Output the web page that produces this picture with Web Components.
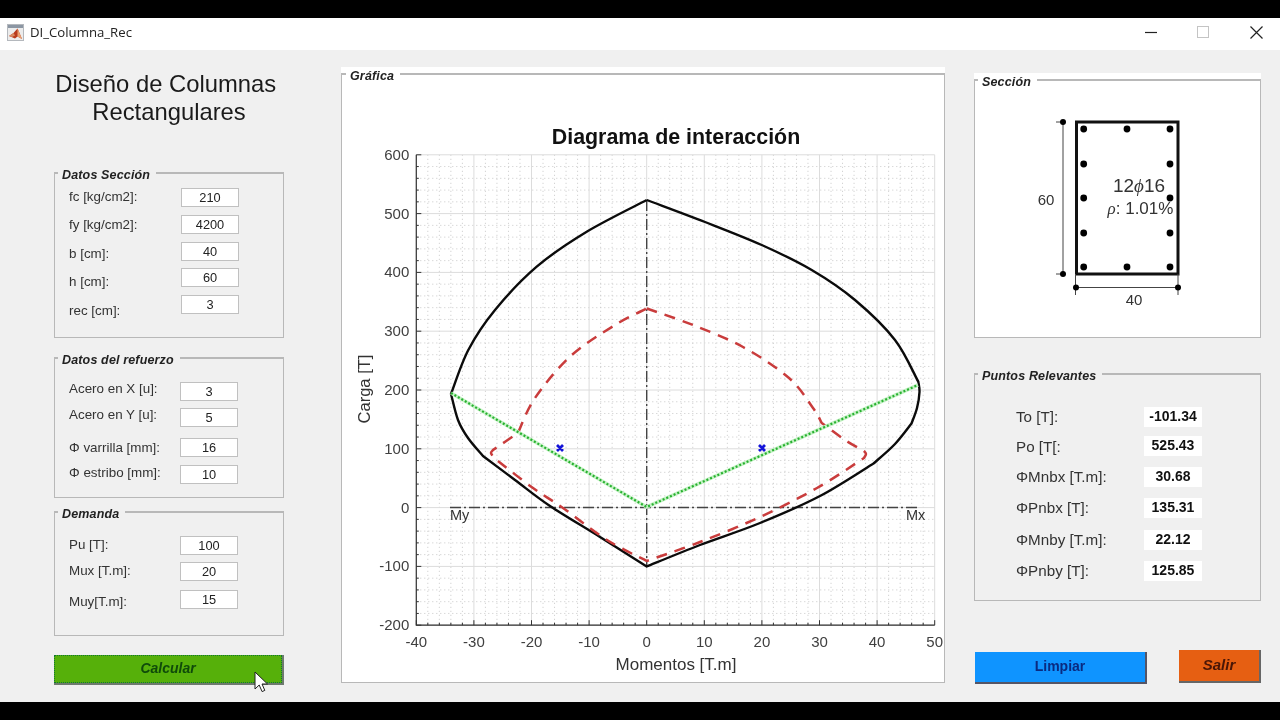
<!DOCTYPE html>
<html lang="es"><head><meta charset="utf-8"><title>DI_Columna_Rec</title>
<style>
html,body{margin:0;padding:0;background:#000}
body{font-family:"Liberation Sans",Arial,sans-serif}
</style></head><body>
<x-window>
  <x-titlebar slot="top" caption="DI_Columna_Rec"></x-titlebar>
  <x-column slot="left" style="--w:230px;--pt:20px">
    <x-heading>Diseño de Columnas&nbsp;<br>Rectangulares</x-heading>
    <x-panel caption="Datos Sección" style="--h:172px;--mt:40px;--lw:112px">
      <x-field label="fc [kg/cm2]:" value="210" gap="8" nudge="-1"></x-field>
      <x-field label="fy [kg/cm2]:" value="4200" gap="8" nudge="0"></x-field>
      <x-field label="b [cm]:" value="40" gap="8" nudge="2"></x-field>
      <x-field label="h [cm]:" value="60" gap="7" nudge="4"></x-field>
      <x-field label="rec [cm]:" value="3" gap="8" nudge="6"></x-field>
    </x-panel>
    <x-panel caption="Datos del refuerzo" style="--h:147px;--mt:13px;--lw:111px">
      <x-field label="Acero en X [u]:" value="3" gap="17" nudge="-3.5"></x-field>
      <x-field label="Acero en Y [u]:" value="5" gap="7" nudge="-3.5"></x-field>
      <x-field label="Φ varrilla [mm]:" value="16" gap="11" nudge="-0.5"></x-field>
      <x-field label="Φ estribo [mm]:" value="10" gap="8" nudge="-2"></x-field>
    </x-panel>
    <x-panel caption="Demanda" style="--h:131px;--mt:7px;--lw:111px">
      <x-field label="Pu [T]:" value="100" gap="17" nudge="-1"></x-field>
      <x-field label="Mux [T.m]:" value="20" gap="7" nudge="-1.5"></x-field>
      <x-field label="Muy[T.m]:" value="15" gap="9" nudge="1.5"></x-field>
    </x-panel>
    <x-button kind="calc" style="--mt:19px;--bw:230px;--bh:30px">Calcular<x-cursor slot="over"></x-cursor></x-button>
  </x-column>
  <x-column slot="mid" style="--w:604px;--pt:17px">
    <x-panel caption="Gráfica" white flush style="--h:616px;--lm:4px"><x-plot></x-plot></x-panel>
  </x-column>
  <x-column slot="right" style="--w:287px;--pt:23px">
    <x-panel caption="Sección" white flush style="--h:265px"><x-section-view></x-section-view></x-panel>
    <x-panel caption="Puntos Relevantes" style="--h:234px;--mt:29px;--lw:128px;--pl:41px">
      <x-result label="To [T]:" value="-101.34" gap="26" nudge="-1"></x-result>
      <x-result label="Po [T[:" value="525.43" gap="9" nudge="0"></x-result>
      <x-result label="ΦMnbx [T.m]:" value="30.68" gap="11" nudge="-1"></x-result>
      <x-result label="ΦPnbx [T]:" value="135.31" gap="11" nudge="-1"></x-result>
      <x-result label="ΦMnby [T.m]:" value="22.12" gap="12" nudge="-1"></x-result>
      <x-result label="ΦPnby [T]:" value="125.85" gap="11" nudge="-1"></x-result>
    </x-panel>
    <x-actions>
      <x-button kind="clear" style="--mt:2px;--ml:1px;--bw:172px;--bh:32px">Limpiar</x-button>
      <x-button kind="exit" style="--bw:82px;--bh:33px">Salir</x-button>
    </x-actions>
  </x-column>
</x-window>
<script>
function def(name, css, html){
  customElements.define(name, class extends HTMLElement{
    constructor(){super();const r=this.attachShadow({mode:'open'});r.innerHTML='<style>'+css+'</style>'+(typeof html==='function'?html(this):html);}
  });
}
def('x-window',`
:host{display:flex;flex-direction:column;width:1280px;height:720px;background:#000;overflow:hidden;filter:blur(.4px)}
.top{height:18px;flex:none}.bot{height:18px;flex:none}
.tb{flex:none}
main{flex:1;background:#f0f0f0;display:flex;padding-left:54px;gap:0}
.l{margin-right:57px}.m{margin-right:29px}
`,`<div class="top"></div><div class="tb"><slot name="top"></slot></div>
<main><div class="l"><slot name="left"></slot></div><div class="m"><slot name="mid"></slot></div><div><slot name="right"></slot></div></main>
<div class="bot"></div>`);

def('x-titlebar',`
:host{display:flex;align-items:center;box-sizing:border-box;height:32px;padding-bottom:4px;background:#fff;font:13.2px "Open Sans","Noto Sans",sans-serif;color:#222}
svg{display:block}
.ic{margin:0 6px 0 7px}
.cap{flex:1}
.ctl{display:flex;align-items:center}
`,h=>`<svg class="ic" width="17" height="17" viewBox="0 0 17 17"><rect x=".5" y=".5" width="16" height="16" fill="#ececec" stroke="#b4b8bd"/><rect x="1" y="1" width="15" height="3" fill="#8b96a3"/><path d="M2 12 6.5 9 10.5 4.5 12.5 9 15 15 10.5 12.5 8 14.5z" fill="#b83a1c"/><path d="M10.5 4.5 12.5 9 15 15 10.5 12.5z" fill="#e9a070"/><path d="M2 12 6.5 9 8 11.5 5 13z" fill="#d98a62"/></svg>
<span class="cap">${h.getAttribute('caption')}</span>
<div class="ctl">
<svg width="12" height="12" viewBox="0 0 12 12" style="margin-right:40px"><path d="M0 6.5h12" stroke="#222" stroke-width="1.2"/></svg>
<svg width="12" height="12" viewBox="0 0 12 12" style="margin-right:41px"><rect x=".5" y=".5" width="11" height="11" fill="none" stroke="#c4c4c4"/></svg>
<svg width="13" height="13" viewBox="0 0 13 13" style="margin-right:17px"><path d="M.5.5l12 12M12.5.5l-12 12" stroke="#222" stroke-width="1.2"/></svg>
</div>`);

def('x-column',`:host{display:flex;flex-direction:column;width:var(--w);padding-top:var(--pt);box-sizing:border-box}`,`<slot></slot>`);

def('x-heading',`:host{display:block;font-size:23.8px;line-height:28px;text-align:center;color:#1a1a1a;width:230px}`,`<slot></slot>`);

def('x-panel',`
:host{display:block;height:var(--h);margin-top:var(--mt,0);box-sizing:border-box}
:host([white]){background:#fff}
fieldset{margin:0;height:100%;box-sizing:border-box;border:1px solid #b8b8b8;border-top-width:2px;padding:0;min-width:0}
.c{padding-left:var(--pl,14px)}
:host([flush]) .c{padding:0}
legend{margin-left:var(--lm,3px);padding:0 6px 0 4px;font:italic bold 12.5px/18px "Liberation Sans",sans-serif;color:#222;height:14px;letter-spacing:.15px}
`,h=>`<fieldset><legend>${h.getAttribute('caption')}</legend><div class="c"><slot></slot></div></fieldset>`);

const rowCss=`
:host{display:flex;align-items:center;height:var(--rh,19px);margin-top:calc(var(--g)*1px)}
.lb{width:var(--lw);flex:none;font-size:13.4px;color:#333;white-space:nowrap;line-height:15px;margin-top:calc(var(--n)*2px)}
.v{box-sizing:border-box;width:58px;height:100%;background:#fff;text-align:center;font-size:12.8px;color:#222;border:1px solid #c0c0c0;display:flex;align-items:center;justify-content:center}
`;
function row(h){h.style.setProperty('--g',h.getAttribute('gap'));h.style.setProperty('--n',h.getAttribute('nudge'));
 return `<span class="lb">${h.getAttribute('label')}</span><span class="v">${h.getAttribute('value')}</span>`;}
def('x-field',rowCss,row);
def('x-result',rowCss+`:host{--rh:20px}.lb{font-size:15.2px}.v{border:0;font-weight:bold;font-size:14px;color:#111;padding-bottom:2px}`,row);

def('x-actions',`:host{display:flex;justify-content:space-between;margin-top:49px;align-items:flex-start}`,`<slot></slot>`);

def('x-button',`
:host{display:block;position:relative;box-sizing:border-box;width:var(--bw);height:var(--bh);margin-top:var(--mt,0);margin-left:var(--ml,0);
 font:italic bold 14px/1 "Liberation Sans",sans-serif;
 border-right:2px solid #6e7a6e;border-bottom:2px solid #6e7a6e}
.i{height:100%;display:flex;align-items:center;justify-content:center;box-sizing:border-box;padding-bottom:2px}
:host([kind=calc]){background:#56b00a;color:#0f4a0a}
:host([kind=calc]) .i{border:1px dotted #173;padding-bottom:3px}
:host([kind=clear]){background:#0f94ff;color:#0a2a80;font-style:normal;border-right-color:#556;border-bottom-color:#556}
:host([kind=exit]){background:#e65f12;color:#4a1606;font-size:15px;border-right-color:#666;border-bottom-color:#666}
`,`<div class="i"><slot></slot></div><slot name="over"></slot>`);

def('x-cursor',`:host{position:absolute;left:200px;top:16px;width:14px;height:22px;display:block}svg{display:block}`,
`<svg width="14" height="22" viewBox="0 0 14 22"><path d="M1 1v17l4.2-4 2.9 6.6 2.7-1.2-2.8-6.4H13.5z" fill="#fff" stroke="#222" stroke-width="1" stroke-linejoin="round"/></svg>`);

/* Catmull-Rom smoothing for one run of points between two corners */
function smooth(p){
  let d='';
  for(let i=0;i<p.length-1;i++){
    const a=p[Math.max(i-1,0)],b=p[i],c=p[i+1],e=p[Math.min(i+2,p.length-1)];
    d+=`C${(b[0]+(c[0]-a[0])/6).toFixed(1)} ${(b[1]+(c[1]-a[1])/6).toFixed(1)} ${(c[0]-(e[0]-b[0])/6).toFixed(1)} ${(c[1]-(e[1]-b[1])/6).toFixed(1)} ${c[0]} ${c[1]}`;
  }
  return d;
}
function curve(runs){ return `M${runs[0][0][0]} ${runs[0][0][1]}`+runs.map(smooth).join(''); }

const blackRuns=[
 [[646.7,200],[705,222],[761.7,245],[811.7,270],[855,300],[895,340],[918.3,381.7]],
 [[918.3,381.7],[919.5,392],[917,408],[911.5,423.5]],
 [[911.5,423.5],[895,444],[873.5,463.5]],
 [[873.5,463.5],[820,496],[760,523],[700,545],[646.7,566.5]],
 [[646.7,566.5],[600,537],[550,506],[515,480],[483,456]],
 [[483,456],[468,438],[458,420],[451,394]],
 [[451,394],[468.3,350],[495,310],[536.7,266.7],[586.7,231.7],[646.7,200]]
];
const redRuns=[
 [[646.7,308.5],[693,325],[743,347],[789,378],[813,408],[821.7,423]],
 [[821.7,423],[845,440],[864,451]],
 [[864,451],[866,454],[864,458]],
 [[864,458],[817,488],[760,517],[700,542],[646.7,561]],
 [[646.7,561],[607,540],[563,508],[533,488],[494,458]],
 [[494,458],[491,453],[493,450]],
 [[493,450],[518,433]],
 [[518,433],[535,398],[570,356.7],[615,325],[646.7,308.5]]
];

def('x-plot',`:host{display:block}svg{display:block;font-family:"Liberation Sans",sans-serif}`,()=>{
  const X=v=>646.7+5.76*v, Y=v=>507.6-0.588*v;
  let s='<svg width="602" height="601" viewBox="342 81 602 601">';
  const L=X(-40),R=X(50),T=Y(600),B=Y(-200);
  let minor='',major='',ticks='',labels='';
  for(let v=-40;v<=50;v+=2){ if(v%10) minor+=`M${X(v)} ${T}V${B}`; }
  for(let v=-200;v<=600;v+=20){ if(v%100) minor+=`M${L} ${Y(v)}H${R}`; }
  for(let v=-40;v<=50;v+=10){ major+=`M${X(v)} ${T}V${B}`; ticks+=`M${X(v)} ${B}v-5`;
    labels+=`<text x="${X(v)}" y="${B+22}" text-anchor="middle">${v}</text>`; }
  for(let v=-200;v<=600;v+=100){ major+=`M${L} ${Y(v)}H${R}`; ticks+=`M${L} ${Y(v)}h5`;
    labels+=`<text x="${L-7}" y="${Y(v)+5}" text-anchor="end">${v}</text>`; }
  for(let v=-40;v<=50;v+=2) if(v%10) ticks+=`M${X(v)} ${B}v-2.5`;
  for(let v=-200;v<=600;v+=20) if(v%100) ticks+=`M${L} ${Y(v)}h2.5`;
  s+=`<path d="${minor}" stroke="#c8c8c8" stroke-width="1" stroke-dasharray="1 3" fill="none"/>`;
  s+=`<path d="${major}" stroke="#dcdcdc" stroke-width="1" fill="none"/>`;
  s+=`<path d="M${L} ${T}V${B}H${R}" stroke="#333" stroke-width="1.2" fill="none"/><path d="${ticks}" stroke="#333" stroke-width="1" fill="none"/>`;
  s+=`<g font-size="15" fill="#404040">${labels}</g>`;
  s+=`<text x="676" y="144" text-anchor="middle" font-size="21.4" font-weight="bold" fill="#111">Diagrama de interacción</text>`;
  s+=`<text x="676" y="670" text-anchor="middle" font-size="17" fill="#333">Momentos [T.m]</text>`;
  s+=`<text transform="translate(370 389) rotate(-90)" text-anchor="middle" font-size="16.5" fill="#333">Carga [T]</text>`;
  s+=`<path d="M450 507.5H920M646.7 200V566" stroke="#444" stroke-width="1.4" stroke-dasharray="11 3 2 3" fill="none"/>`;
  s+=`<path fill="none" stroke="#0b0b0b" stroke-width="2.4" stroke-linejoin="round" d="${curve(blackRuns)}"/>`;
  s+=`<path fill="none" stroke="#c93c3c" stroke-width="2.5" stroke-dasharray="11 8" d="${curve(redRuns)}"/>`;
  s+=`<path d="M451 393L646.7 507L918 385" fill="none" stroke="#c4f2c4" stroke-width="3.6"/>`;
  s+=`<path d="M451 393L646.7 507L918 385" fill="none" stroke="#28b030" stroke-width="2.2" stroke-dasharray="2 2"/>`;
  s+=`<path d="M557 445l6 6m0-6l-6 6M759 445l6 6m0-6l-6 6" stroke="#1414d8" stroke-width="2.8" fill="none"/>`;
  s+=`<g font-size="14.5" fill="#333"><text x="450" y="520">My</text><text x="906" y="520">Mx</text></g>`;
  return s+'</svg>';
});

def('x-section-view',`:host{display:block}svg{display:block;font-family:"Liberation Sans",sans-serif}`,()=>{
  let s='<svg width="285" height="249" viewBox="975 87 285 249">';
  s+=`<rect x="1076.5" y="122" width="101.5" height="152" fill="#fff" stroke="#111" stroke-width="3"/>`;
  const xs=[1083.7,1127,1170], ys=[129,164,198,233,267];
  let d='';
  ys.forEach((y,i)=>{xs.forEach((x,j)=>{ if(i==0||i==4||j!=1) d+=`<circle cx="${x}" cy="${y}" r="3.4"/>`;});});
  s+=`<g fill="#000">${d}</g>`;
  s+=`<path d="M1063 122V274M1056 122h7M1056 274h7M1076 287.5H1178M1075.5 274V295M1178 274V295" stroke="#444" stroke-width="1" fill="none"/>`;
  s+=`<g fill="#000"><circle cx="1063" cy="122" r="3"/><circle cx="1063" cy="274" r="3"/><circle cx="1076" cy="287.5" r="3"/><circle cx="1178" cy="287.5" r="3"/></g>`;
  s+=`<g font-size="15" fill="#333"><text x="1046" y="205" text-anchor="middle">60</text><text x="1134" y="305" text-anchor="middle">40</text></g>`;
  s+=`<text x="1139" y="192" text-anchor="middle" font-size="19" fill="#333">12<tspan font-family="Liberation Serif" font-style="italic">ϕ</tspan>16</text>`;
  s+=`<text x="1140.5" y="214" text-anchor="middle" font-size="17" fill="#333"><tspan font-family="Liberation Serif" font-style="italic">ρ</tspan>: 1.01%</text>`;
  return s+'</svg>';
});
</script>
</body></html>
